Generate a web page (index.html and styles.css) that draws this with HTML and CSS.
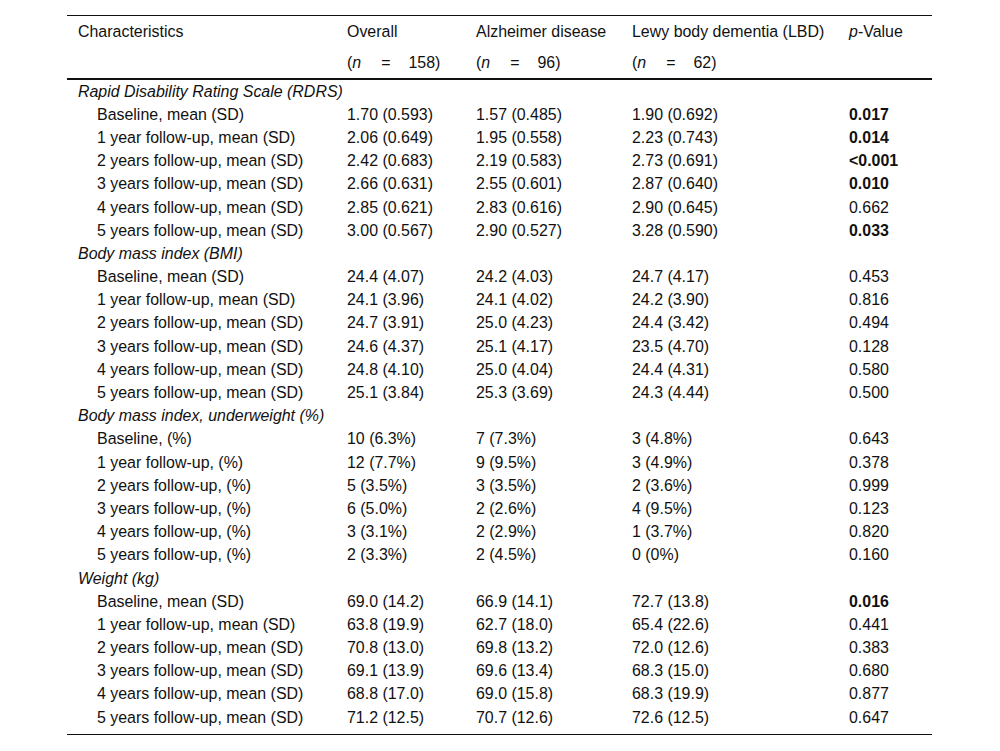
FILE: index.html
```html
<!DOCTYPE html>
<html>
<head>
<meta charset="utf-8">
<link rel="stylesheet" href="styles.css">
</head>
<body>
<div class="wrap">
<table class="tbl">
<colgroup>
<col class="c1"><col class="c2"><col class="c3"><col class="c4"><col class="c5">
</colgroup>
<thead>
<tr class="h1"><th>Characteristics</th><th>Overall</th><th>Alzheimer disease</th><th>Lewy body dementia (LBD)</th><th><i>p</i>-Value</th></tr>
<tr class="h2"><th></th><th>(<i>n</i><span class="eq">=</span>158)</th><th>(<i>n</i><span class="eq">=</span>96)</th><th>(<i>n</i><span class="eq">=</span>62)</th><th></th></tr>
</thead>
<tbody>
<tr class="sec"><td colspan="5">Rapid Disability Rating Scale (RDRS)</td></tr>
<tr><td class="ind">Baseline, mean (SD)</td><td>1.70 (0.593)</td><td>1.57 (0.485)</td><td>1.90 (0.692)</td><td><b>0.017</b></td></tr>
<tr><td class="ind">1 year follow-up, mean (SD)</td><td>2.06 (0.649)</td><td>1.95 (0.558)</td><td>2.23 (0.743)</td><td><b>0.014</b></td></tr>
<tr><td class="ind">2 years follow-up, mean (SD)</td><td>2.42 (0.683)</td><td>2.19 (0.583)</td><td>2.73 (0.691)</td><td><b>&lt;0.001</b></td></tr>
<tr><td class="ind">3 years follow-up, mean (SD)</td><td>2.66 (0.631)</td><td>2.55 (0.601)</td><td>2.87 (0.640)</td><td><b>0.010</b></td></tr>
<tr><td class="ind">4 years follow-up, mean (SD)</td><td>2.85 (0.621)</td><td>2.83 (0.616)</td><td>2.90 (0.645)</td><td>0.662</td></tr>
<tr><td class="ind">5 years follow-up, mean (SD)</td><td>3.00 (0.567)</td><td>2.90 (0.527)</td><td>3.28 (0.590)</td><td><b>0.033</b></td></tr>
<tr class="sec"><td colspan="5">Body mass index (BMI)</td></tr>
<tr><td class="ind">Baseline, mean (SD)</td><td>24.4 (4.07)</td><td>24.2 (4.03)</td><td>24.7 (4.17)</td><td>0.453</td></tr>
<tr><td class="ind">1 year follow-up, mean (SD)</td><td>24.1 (3.96)</td><td>24.1 (4.02)</td><td>24.2 (3.90)</td><td>0.816</td></tr>
<tr><td class="ind">2 years follow-up, mean (SD)</td><td>24.7 (3.91)</td><td>25.0 (4.23)</td><td>24.4 (3.42)</td><td>0.494</td></tr>
<tr><td class="ind">3 years follow-up, mean (SD)</td><td>24.6 (4.37)</td><td>25.1 (4.17)</td><td>23.5 (4.70)</td><td>0.128</td></tr>
<tr><td class="ind">4 years follow-up, mean (SD)</td><td>24.8 (4.10)</td><td>25.0 (4.04)</td><td>24.4 (4.31)</td><td>0.580</td></tr>
<tr><td class="ind">5 years follow-up, mean (SD)</td><td>25.1 (3.84)</td><td>25.3 (3.69)</td><td>24.3 (4.44)</td><td>0.500</td></tr>
<tr class="sec"><td colspan="5">Body mass index, underweight (%)</td></tr>
<tr><td class="ind">Baseline, (%)</td><td>10 (6.3%)</td><td>7 (7.3%)</td><td>3 (4.8%)</td><td>0.643</td></tr>
<tr><td class="ind">1 year follow-up, (%)</td><td>12 (7.7%)</td><td>9 (9.5%)</td><td>3 (4.9%)</td><td>0.378</td></tr>
<tr><td class="ind">2 years follow-up, (%)</td><td>5 (3.5%)</td><td>3 (3.5%)</td><td>2 (3.6%)</td><td>0.999</td></tr>
<tr><td class="ind">3 years follow-up, (%)</td><td>6 (5.0%)</td><td>2 (2.6%)</td><td>4 (9.5%)</td><td>0.123</td></tr>
<tr><td class="ind">4 years follow-up, (%)</td><td>3 (3.1%)</td><td>2 (2.9%)</td><td>1 (3.7%)</td><td>0.820</td></tr>
<tr><td class="ind">5 years follow-up, (%)</td><td>2 (3.3%)</td><td>2 (4.5%)</td><td>0 (0%)</td><td>0.160</td></tr>
<tr class="sec"><td colspan="5">Weight (kg)</td></tr>
<tr><td class="ind">Baseline, mean (SD)</td><td>69.0 (14.2)</td><td>66.9 (14.1)</td><td>72.7 (13.8)</td><td><b>0.016</b></td></tr>
<tr><td class="ind">1 year follow-up, mean (SD)</td><td>63.8 (19.9)</td><td>62.7 (18.0)</td><td>65.4 (22.6)</td><td>0.441</td></tr>
<tr><td class="ind">2 years follow-up, mean (SD)</td><td>70.8 (13.0)</td><td>69.8 (13.2)</td><td>72.0 (12.6)</td><td>0.383</td></tr>
<tr><td class="ind">3 years follow-up, mean (SD)</td><td>69.1 (13.9)</td><td>69.6 (13.4)</td><td>68.3 (15.0)</td><td>0.680</td></tr>
<tr><td class="ind">4 years follow-up, mean (SD)</td><td>68.8 (17.0)</td><td>69.0 (15.8)</td><td>68.3 (19.9)</td><td>0.877</td></tr>
<tr class="last"><td class="ind">5 years follow-up, mean (SD)</td><td>71.2 (12.5)</td><td>70.7 (12.6)</td><td>72.6 (12.5)</td><td>0.647</td></tr>
</tbody>
</table>
</div>
</body>
</html>
```
FILE: styles.css
```css
html, body {
  margin: 0;
  padding: 0;
  background: #fff;
}
.wrap {
  padding: 15px 0 0 67px;
}
.tbl {
  width: 865px;
  table-layout: fixed;
  border-collapse: collapse;
  font-family: "Liberation Sans", Arial, sans-serif;
  font-size: 15.95px;
  color: #111;
  border-top: 1px solid #111;
  border-bottom: 1px solid #111;
}
.c1 { width: 269px; }
.c2 { width: 129px; }
.c3 { width: 156px; }
.c4 { width: 217px; }
.c5 { width: 94px; }
.tbl th {
  font-weight: normal;
  text-align: left;
  padding: 0 0 0 11px;
  height: 31px;
  line-height: 18px;
  white-space: nowrap;
}
.tbl thead tr.h2 th {
  border-bottom: 2px solid #111;
}
.tbl td {
  padding: 0 0 0 11px;
  height: 23.2px;
  line-height: 18px;
  white-space: nowrap;
}
.tbl tr.sec td {
  font-style: italic;
}
.tbl td.ind {
  padding-left: 30px;
}
.tbl tr.last td {
  padding-bottom: 5px;
}
.eq {
  margin: 0 18px 0 20px;
}
```
